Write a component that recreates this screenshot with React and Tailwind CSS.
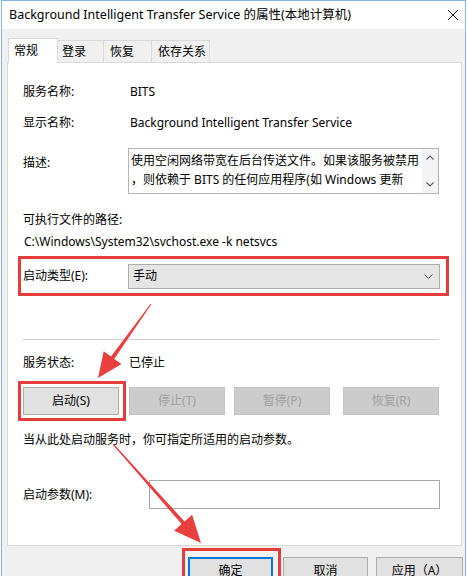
import React from 'react';

const Btn = ({ children, disabled, className = '' }) => (
    <div
        className={`flex items-center justify-center h-[28px] w-[96px] border text-[12px] ${
            disabled ? 'bg-[#cccccc] border-[#c4c4c4] text-[#a0a0a0]' : 'bg-[#e1e1e1] border-[#adadad] text-black'
        } ${className}`}
    >
        {children}
    </div>
);

const Arrows = () => (
    <svg className="absolute left-0 top-0 pointer-events-none" width="468" height="576">
        {/* arrow to 启动 */}
        <polygon
            fill="#ea3f3f"
            points="150.6,303.7 111,356.5 103.7,351.3 98,378 121.5,364.1 114.2,358.9 151.4,304.3"
        />
        {/* arrow to 确定 */}
        <polygon
            fill="#ea3f3f"
            points="112.6,444.4 181.6,524.1 174.1,530.8 201,543 192.1,514.8 184.6,521.5 113.4,443.6"
        />
    </svg>
);

const App = () => {
    return (
        <div className="relative w-[468px] h-[576px] overflow-hidden bg-white font-['Noto_Sans','Noto_Sans_CJK_SC',sans-serif] text-[12px] text-black leading-[14px]">
            <div className="ml-px w-[465px] h-full border-l border-r border-t border-[#86b3e3] flex flex-col">
                {/* Title bar */}
                <div className="h-[28px] flex items-center justify-between pl-[7px] pr-[4px] bg-white shrink-0">
                    <span className="text-[12.5px] whitespace-nowrap">Background Intelligent Transfer Service 的属性(本地计算机)</span>
                    <svg width="12" height="12" viewBox="0 0 12 12" className="mr-[2px]">
                        <path d="M1 1 L11 11 M11 1 L1 11" stroke="#1a1a1a" strokeWidth="1" />
                    </svg>
                </div>

                {/* Body */}
                <div className="flex-1 bg-[#f0f0f0] pl-[5px] pt-[9px] flex flex-col">
                    {/* Tabs */}
                    <div className="flex items-end h-[24px] pl-px relative z-10">
                        <div className="h-[25px] w-[50px] bg-white border border-b-0 border-[#d9d9d9] pl-[5px] pt-[5px] -mb-px">常规</div>
                        <div className="h-[22px] w-[46px] border-t border-r border-[#d9d9d9] pl-[4px] pt-[4px]">登录</div>
                        <div className="h-[22px] w-[48px] border-t border-r border-[#d9d9d9] pl-[6px] pt-[4px]">恢复</div>
                        <div className="h-[22px] w-[58px] border-t border-r border-[#d9d9d9] pl-[6px] pt-[4px]">依存关系</div>
                    </div>

                    {/* Panel */}
                    <div className="w-[455px] h-[484px] bg-white border border-[#d9d9d9] pl-[15px] flex flex-col shrink-0">
                        <div className="mt-[17px] h-[24px] flex items-center">
                            <span className="w-[107px]">服务名称:</span>
                            <span>BITS</span>
                        </div>
                        <div className="mt-[7px] h-[24px] flex items-center">
                            <span className="w-[107px]">显示名称:</span>
                            <span className="whitespace-nowrap">Background Intelligent Transfer Service</span>
                        </div>
                        <div className="mt-[13px] h-[46px] flex">
                            <span className="w-[105px] pt-[8px]">描述:</span>
                            <div className="w-[311px] h-[46px] border border-[#b4b4b4] flex bg-white">
                                <div className="flex-1 pl-[2px] pt-[2px] leading-[19px] whitespace-nowrap overflow-hidden">
                                    <div>使用空闲网络带宽在后台传送文件。如果该服务被禁用</div>
                                    <div>，则依赖于 BITS 的任何应用程序(如 Windows 更新</div>
                                </div>
                                <div className="w-[16px] bg-[#f4f4f4] flex flex-col items-center justify-between py-[6px]">
                                    <svg width="8" height="5" viewBox="0 0 8 5">
                                        <path d="M0.5 4.5 L4 1 L7.5 4.5" stroke="#606060" fill="none" strokeWidth="1.2" />
                                    </svg>
                                    <svg width="8" height="5" viewBox="0 0 8 5">
                                        <path d="M0.5 0.5 L4 4 L7.5 0.5" stroke="#606060" fill="none" strokeWidth="1.2" />
                                    </svg>
                                </div>
                            </div>
                        </div>
                        <div className="mt-[19px] h-[14px]">可执行文件的路径:</div>
                        <div className="mt-[8px] h-[14px] pl-px whitespace-nowrap">C:\Windows\System32\svchost.exe -k netsvcs</div>

                        {/* Startup type, highlighted */}
                        <div className="mt-[7px] -ml-[5px] w-[431px] h-[40px] border-[3px] border-[#e53c3c] flex items-center pl-[2px]">
                            <span className="w-[105px]">启动类型(E):</span>
                            <div className="w-[312px] h-[25px] bg-[#e5e5e5] border border-[#acacac] flex items-center justify-between pl-[4px] pr-[6px]">
                                <span>手动</span>
                                <svg width="9" height="5" viewBox="0 0 9 5">
                                    <path d="M0.5 0.5 L4.5 4.5 L8.5 0.5" stroke="#505050" fill="none" strokeWidth="1" />
                                </svg>
                            </div>
                        </div>

                        <div className="mt-[43px] w-[416px] h-px bg-[#cfcfcf]" />

                        <div className="mt-[16px] h-[14px] flex">
                            <span className="w-[106px]">服务状态:</span>
                            <span>已停止</span>
                        </div>

                        <div className="mt-[11px] h-[40px] flex items-center">
                            <div className="-ml-[5px] w-[108px] h-[40px] border-[3px] border-[#e53c3c] flex items-center pl-[2px]">
                                <Btn>启动(S)</Btn>
                            </div>
                            <Btn disabled className="ml-[3px]">停止(T)</Btn>
                            <Btn disabled className="ml-[9px]">暂停(P)</Btn>
                            <Btn disabled className="ml-[13px]">恢复(R)</Btn>
                        </div>

                        <div className="mt-[12px] h-[14px] whitespace-nowrap">当从此处启动服务时，你可指定所适用的启动参数。</div>

                        <div className="mt-[33px] h-[29px] flex items-center">
                            <span className="w-[126px]">启动参数(M):</span>
                            <div className="w-[291px] h-[29px] border border-[#a8a8a8] bg-white" />
                        </div>
                    </div>

                    {/* Dialog buttons */}
                    <div className="mt-[2px] flex items-start">
                        <div className="ml-[175px] w-[99px] h-[40px] border-[3px] border-[#e53c3c] pl-[3px] pt-[6px]">
                            <div className="w-[85px] h-[28px] bg-[#e1e1e1] border-2 border-[#0078d7] flex items-center justify-center">确定</div>
                        </div>
                        <div className="ml-[2px] mt-[9px] w-[85px] h-[28px] bg-[#e1e1e1] border border-[#adadad] flex items-center justify-center">取消</div>
                        <div className="ml-[8px] mt-[9px] w-[87px] h-[28px] bg-[#e1e1e1] border border-[#adadad] flex items-center justify-center">应用（A）</div>
                    </div>
                </div>
            </div>
            <Arrows />
        </div>
    );
};

export default App;
